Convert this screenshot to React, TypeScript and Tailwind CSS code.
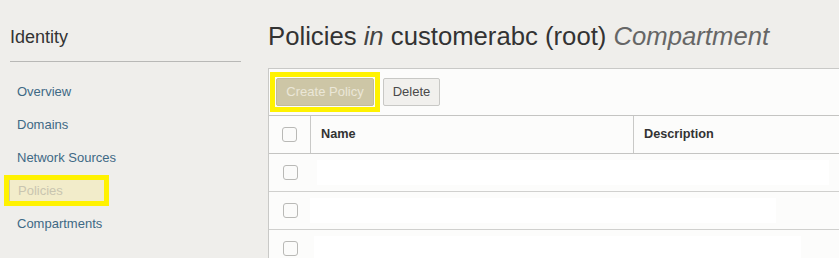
import React from "react";

const font = { fontFamily: '"Liberation Sans", Arial, sans-serif' };

function Checkbox() {
  return <div className="w-[15px] h-[15px] rounded-[3px] border border-[#b9b9b6] bg-[#fbfbfa]" />;
}

export default function App() {
  const nav = ["Overview", "Domains", "Network Sources", "Policies", "Compartments"];
  return (
    <div className="w-[839px] h-[258px] overflow-hidden bg-[#efeeeb] flex" style={font}>
      <div className="w-[268px] shrink-0 pl-[10px] pr-[27px] pt-[25px]">
        <div className="text-[18px] leading-[24px] text-[#333333]">Identity</div>
        <div className="mt-[12px] h-px bg-[#b8b8b6]" />
        <div className="mt-[13px] flex flex-col">
          {nav.map((n) =>
            n === "Policies" ? (
              <div key={n} className="-ml-[6px] w-[105px] h-[31px] border-[5px] border-[#fff200] bg-[#f2ecca] flex items-center mt-[1px] mb-[1px]">
                <span className="pl-[8px] text-[13px] text-[#c9c5b0] border-l border-[#c9c5b0] h-full flex items-center">{n}</span>
              </div>
            ) : (
              <div key={n} className="h-[33px] flex items-center pl-[7px] text-[13px] text-[#3e6985]">
                {n}
              </div>
            )
          )}
        </div>
      </div>
      <div className="flex-1 flex flex-col min-w-0">
        <div className="shrink-0 pt-[20px] h-[68px] text-[25.7px] leading-[32px] text-[#333333] whitespace-nowrap">
          Policies <i className="text-[#444444]">in</i> customerabc (root){" "}
          <i className="text-[#666666]">Compartment</i>
        </div>
        <div className="shrink-0 bg-[#fcfcfb] border-l border-t border-[#c9c9c7]">
          <div className="h-[47px] flex items-center pl-[1px] border-b border-[#c4c4c2]">
            <div className="border-[5px] border-[#fff200] p-px">
              <div className="w-[98px] h-[28px] rounded-[2px] bg-[#cdc6a6] border border-[#c2bb9c] flex items-center justify-center text-[13px] text-[#ebe7d8]">
                Create Policy
              </div>
            </div>
            <div className="ml-[3px] w-[57px] h-[28px] rounded-[2px] bg-[#f1f0ed] border border-[#c8c8c5] flex items-center justify-center text-[13px] text-[#4a4a4a]">
              Delete
            </div>
          </div>
          <div className="h-[38px] flex border-b border-[#c4c4c2]">
            <div className="w-[42px] flex items-center justify-center border-r border-[#c9c9c7]">
              <Checkbox />
            </div>
            <div className="w-[323px] flex items-center pl-[10px] text-[12.7px] font-bold text-[#333333] border-r border-[#c9c9c7]">
              Name
            </div>
            <div className="flex-1 flex items-center pl-[10px] text-[12.7px] font-bold text-[#333333]">Description</div>
          </div>
          {[
            [6, 512],
            [-1, 466],
            [3, 487],
          ].map(([off, w], i) => (
            <div key={i} className="h-[38px] flex border-b border-[#d0d0ce]">
              <div className="w-[42px] shrink-0 flex items-center justify-center">
                <Checkbox />
              </div>
              <div className="flex items-center">
                <div className="h-[25px] bg-white" style={{ marginLeft: off, width: w }} />
              </div>
            </div>
          ))}
        </div>
      </div>
    </div>
  );
}
